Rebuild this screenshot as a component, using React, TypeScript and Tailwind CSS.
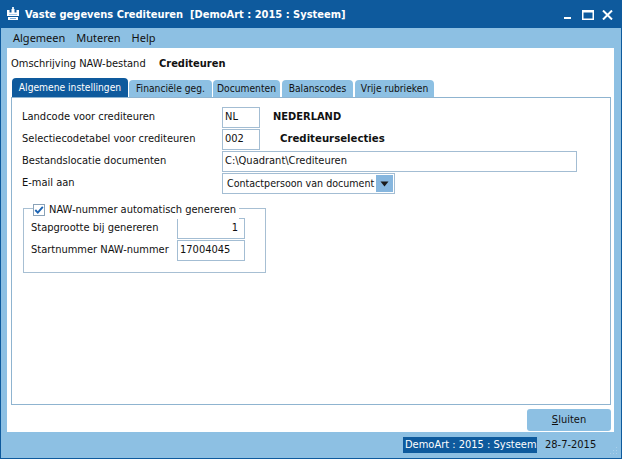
import React from "react";

const F = "font-['Tahoma','DejaVu_Sans_Condensed','DejaVu_Sans',sans-serif]";

function Input({ value, w, right }: { value: string; w: string; right?: boolean }) {
  return (
    <div
      className={`${w} h-[21px] border border-[#a3bdd3] bg-white flex items-center text-[11px] text-[#111] whitespace-nowrap ${right ? "justify-end pr-[6px]" : "pl-[2px]"}`}
    >
      {value}
    </div>
  );
}

export default function App() {
  return (
    <div className={`${F} w-[622px] h-[459px] bg-[#0e5a9d] flex flex-col overflow-hidden select-none whitespace-nowrap`}>
      {/* Title bar */}
      <div className="h-[28px] flex items-center pl-[5px] pr-[9px] shrink-0">
        <svg width="16" height="16" viewBox="0 0 16 16" className="shrink-0">
          <path d="M2 4 L4.5 4 L4.5 6.5 L6.5 6.5 L6.5 3 L9.5 3 L9.5 6.5 L11.5 6.5 L11.5 4 L14 4 L14 10 L2 10 Z" fill="#ffffff" />
          <path d="M3 11 L13 11 L13 14 L3 14 Z" fill="#ffffff" />
          <rect x="7" y="1" width="2" height="2" fill="#dbe9f5" />
          <rect x="5" y="12" width="6" height="1" fill="#7fb0da" />
          <rect x="4" y="8" width="8" height="1" fill="#a9cbe8" />
        </svg>
        <div className="ml-[4px] text-white text-[11px] font-bold whitespace-pre leading-none">
          Vaste gegevens Crediteuren  [DemoArt : 2015 : Systeem]
        </div>
        <div className="ml-auto flex items-center">
          <svg width="8" height="10" viewBox="0 0 8 10" className="mt-[1px]">
            <rect x="0" y="7" width="7" height="2" fill="#fff" />
          </svg>
          <svg width="12" height="10" viewBox="0 0 12 10" className="ml-[10px] mt-[1px]">
            <rect x="0.75" y="0.75" width="10.5" height="8.5" fill="none" stroke="#fff" strokeWidth="1.5" />
            <rect x="0" y="0" width="12" height="2.5" fill="#fff" />
          </svg>
          <svg width="11" height="10" viewBox="0 0 11 10" className="ml-[8px] mt-[1px]">
            <path d="M1 0.5 L10 9.5 M10 0.5 L1 9.5" stroke="#fff" strokeWidth="2" />
          </svg>
        </div>
      </div>

      {/* Frame */}
      <div className="flex-1 mx-[1px] mb-[1px] bg-[#8dc0e3] flex flex-col">
        {/* Menu */}
        <div className="h-[20px] flex items-center pl-[12px] text-[11px] text-[#111] shrink-0 font-['Noto_Sans',sans-serif]">
          <span>Algemeen</span>
          <span className="ml-[11px]">Muteren</span>
          <span className="ml-[11px]">Help</span>
        </div>

        {/* White area */}
        <div className="ml-[6px] mr-[7px] h-[384px] bg-white flex flex-col pl-[4px] pr-[3px] shrink-0">
          <div className="h-[30px] flex items-center pt-[2px] text-[11px] text-[#111]">
            <span className="w-[148px]">Omschrijving NAW-bestand</span>
            <span className="font-bold">Crediteuren</span>
          </div>

          {/* Tabs */}
          <div className="flex items-end h-[19px] pl-[1px] text-[10.2px]">
            <div className="h-[19px] w-[116px] bg-[#0e5a9d] text-white rounded-t-[4px] flex items-center justify-center">
              Algemene instellingen
            </div>
            <div className="ml-[1px] h-[17px] w-[83px] bg-[#8dc0e3] text-[#111] rounded-t-[4px] flex items-center justify-center">
              Financiële geg.
            </div>
            <div className="ml-[1px] h-[17px] w-[67px] bg-[#8dc0e3] text-[#111] rounded-t-[4px] flex items-center justify-center">
              Documenten
            </div>
            <div className="ml-[2px] h-[17px] w-[71px] bg-[#8dc0e3] text-[#111] rounded-t-[4px] flex items-center justify-center">
              Balanscodes
            </div>
            <div className="ml-[2px] h-[17px] w-[79px] bg-[#8dc0e3] text-[#111] rounded-t-[4px] flex items-center justify-center">
              Vrije rubrieken
            </div>
          </div>

          {/* Panel */}
          <div className="h-[308px] border border-[#8fb4d0] pl-[10px] pt-[9px] flex flex-col text-[11px] text-[#111]">
            <div className="flex flex-col gap-[1px]">
              <div className="h-[21px] flex items-center">
                <span className="w-[200px]">Landcode voor crediteuren</span>
                <Input value="NL" w="w-[38px]" />
                <span className="ml-[13px] font-bold">NEDERLAND</span>
              </div>
              <div className="h-[21px] flex items-center">
                <span className="w-[200px]">Selectiecodetabel voor crediteuren</span>
                <Input value="002" w="w-[38px]" />
                <span className="ml-[20px] font-bold text-[11.3px]">Crediteurselecties</span>
              </div>
              <div className="h-[21px] flex items-center">
                <span className="w-[200px]">Bestandslocatie documenten</span>
                <Input value="C:\Quadrant\Crediteuren" w="w-[355px]" />
              </div>
              <div className="h-[21px] flex items-center">
                <span className="w-[200px]">E-mail aan</span>
                <div className="w-[173px] h-[21px] border border-[#a3bdd3] bg-white pl-[4px] pr-[1px] flex items-center">
                  <span className="text-[10.6px]">Contactpersoon van document</span>
                  <div className="ml-auto w-[17px] h-[17px] bg-[#86b6de] flex items-center justify-center">
                    <svg width="9" height="6" viewBox="0 0 9 6">
                      <path d="M0.5 0.5 L8.5 0.5 L4.5 5.5 Z" fill="#1a1a1a" />
                    </svg>
                  </div>
                </div>
              </div>
            </div>

            {/* Group box */}
            <div className="relative mt-[14px] ml-[1px] w-[243px] h-[65px] border border-[#a7bfd3] pt-[9px] pl-[7px]">
              <div className="absolute left-[9px] -top-[7px] bg-white flex items-center pr-[3px]">
                <div className="w-[12px] h-[12px] border border-[#8aa2b8] bg-white flex items-center justify-center">
                  <svg width="10" height="10" viewBox="0 0 10 10">
                    <path d="M1.3 5 L3.8 7.6 L8.8 1.8" fill="none" stroke="#1c64b4" strokeWidth="1.9" />
                  </svg>
                </div>
                <span className="ml-[4px]">NAW-nummer automatisch genereren</span>
              </div>
              <div className="flex flex-col gap-[1px]">
                <div className="h-[21px] flex items-center">
                  <span className="w-[146px]">Stapgrootte bij genereren</span>
                  <Input value="1" w="w-[68px]" right />
                </div>
                <div className="h-[21px] flex items-center">
                  <span className="w-[146px]">Startnummer NAW-nummer</span>
                  <Input value="17004045" w="w-[68px]" />
                </div>
              </div>
            </div>
          </div>

          {/* Button row */}
          <div className="flex justify-end pt-[4px]">
            <div className="w-[84px] h-[22px] rounded-[3px] bg-[#8dc0e3] flex items-center justify-center text-[11px] text-[#111]">
              <span>
                <span className="underline">S</span>luiten
              </span>
            </div>
          </div>
        </div>

        {/* Status bar */}
        <div className="flex-1 flex items-center pl-[402px] text-[11px]">
          <div className="h-[16px] w-[134px] bg-[#0e5a9d] text-white flex items-center pl-[2px] overflow-hidden">
            DemoArt : 2015 : Systeem
          </div>
          <div className="ml-[8px] text-[#111]">28-7-2015</div>
          <svg width="8" height="8" viewBox="0 0 8 8" className="ml-auto mr-[3px] mt-[12px]">
            <rect x="6" y="0" width="1" height="1" fill="#a9cfea" />
            <rect x="3" y="3" width="1" height="1" fill="#a9cfea" />
            <rect x="6" y="3" width="1" height="1" fill="#a9cfea" />
            <rect x="0" y="6" width="1" height="1" fill="#a9cfea" />
            <rect x="3" y="6" width="1" height="1" fill="#a9cfea" />
            <rect x="6" y="6" width="1" height="1" fill="#a9cfea" />
          </svg>
        </div>
      </div>
    </div>
  );
}
